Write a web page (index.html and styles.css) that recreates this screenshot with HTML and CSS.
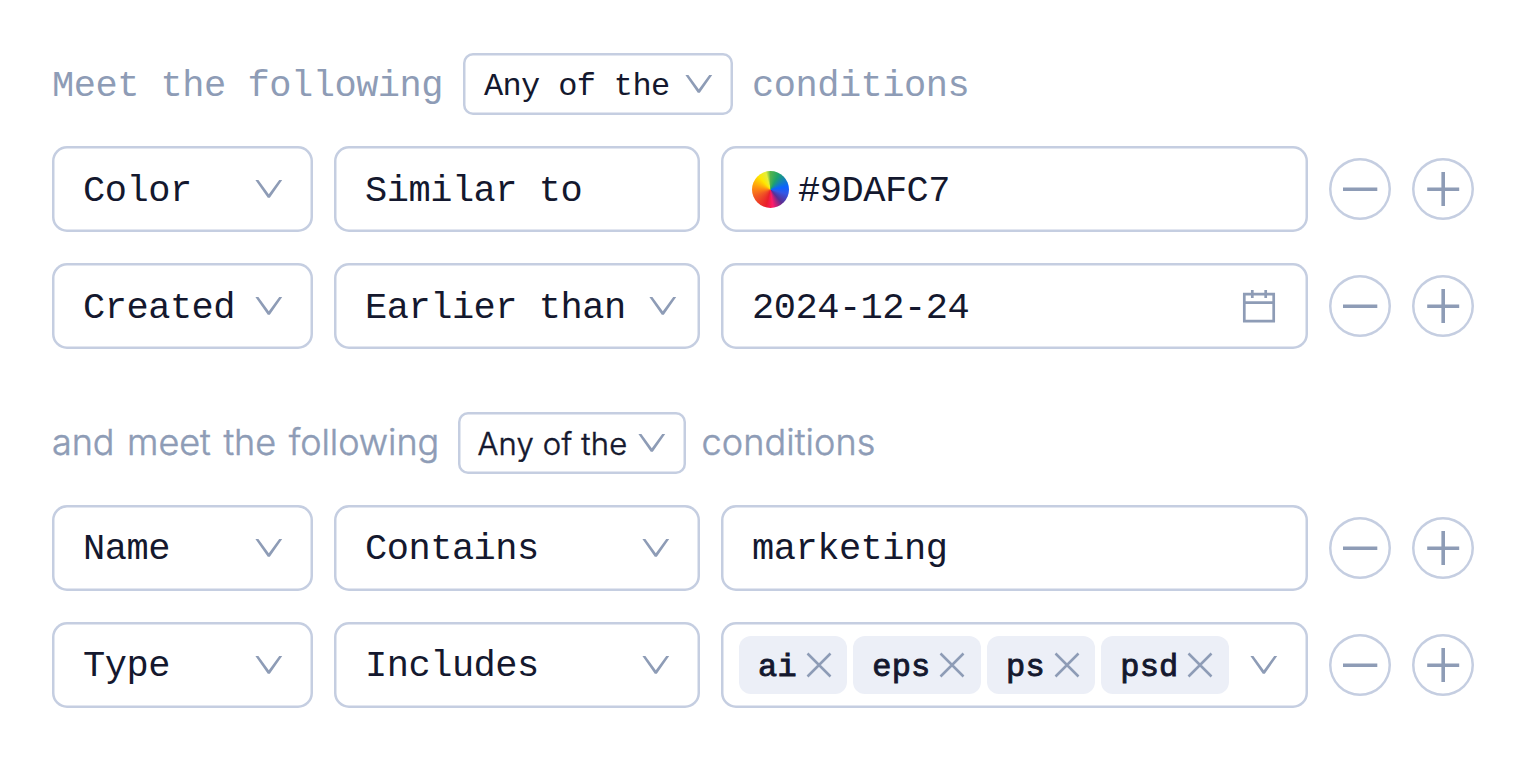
FILE: index.html
```
<!DOCTYPE html>
<html lang="en">
<head>
<meta charset="utf-8">
<title>Filter conditions</title>
<link rel="stylesheet" href="styles.css">
</head>
<body>
<svg class="defs" width="0" height="0">
  <symbol id="chevron" viewBox="0 0 28 20"><path d="M0.400 1H3.400L13.800 15.200 24.200 1H27.200L14.800 18.700H12.800Z"/></symbol>
  <symbol id="close" viewBox="0 0 26 26"><path d="M1.500 1.500 24.500 24.500M24.500 1.500 1.500 24.500"/></symbol>
  <symbol id="minus" viewBox="0 0 62 62"><path d="M14 31.200H48.300"/></symbol>
  <symbol id="plus" viewBox="0 0 62 62"><path d="M15.200 31.200H47.200M31.200 14V48"/></symbol>
</svg>
<main class="filters">
  <section class="group">
    <header class="heading">
      <span class="lead">Meet the following</span>
      <button class="match"><span>Any of the</span><svg class="chevron"><use href="#chevron"/></svg></button>
      <span class="tail">conditions</span>
    </header>
    <div class="row">
      <div class="field"><span>Color</span><svg class="chevron"><use href="#chevron"/></svg></div>
      <div class="field"><span>Similar to</span></div>
      <div class="field value"><i class="wheel"></i><span>#9DAFC7</span></div>
      <button class="round"><svg><use href="#minus"/></svg></button>
      <button class="round"><svg><use href="#plus"/></svg></button>
    </div>
    <div class="row">
      <div class="field"><span>Created</span><svg class="chevron"><use href="#chevron"/></svg></div>
      <div class="field wide-label"><span>Earlier than</span><svg class="chevron"><use href="#chevron"/></svg></div>
      <div class="field value"><span>2024-12-24</span>
        <svg class="calendar" viewBox="0 0 34 34"><path d="M2.300 5.200H31.700V32.200H2.300ZM2.300 13.600H31.700M10.300 1V9M23.700 1V9"/></svg></div>
      <button class="round"><svg><use href="#minus"/></svg></button>
      <button class="round"><svg><use href="#plus"/></svg></button>
    </div>
  </section>
  <section class="group sans">
    <header class="heading">
      <span class="lead">and meet the following</span>
      <button class="match"><span>Any of the</span><svg class="chevron"><use href="#chevron"/></svg></button>
      <span class="tail">conditions</span>
    </header>
    <div class="row">
      <div class="field"><span>Name</span><svg class="chevron"><use href="#chevron"/></svg></div>
      <div class="field"><span>Contains</span><svg class="chevron"><use href="#chevron"/></svg></div>
      <div class="field value"><span>marketing</span></div>
      <button class="round"><svg><use href="#minus"/></svg></button>
      <button class="round"><svg><use href="#plus"/></svg></button>
    </div>
    <div class="row">
      <div class="field"><span>Type</span><svg class="chevron"><use href="#chevron"/></svg></div>
      <div class="field"><span>Includes</span><svg class="chevron"><use href="#chevron"/></svg></div>
      <div class="field value tags">
        <div class="tag"><span>ai</span><svg class="close"><use href="#close"/></svg></div>
        <div class="tag"><span>eps</span><svg class="close"><use href="#close"/></svg></div>
        <div class="tag"><span>ps</span><svg class="close"><use href="#close"/></svg></div>
        <div class="tag"><span>psd</span><svg class="close"><use href="#close"/></svg></div>
        <svg class="chevron"><use href="#chevron"/></svg>
      </div>
      <button class="round"><svg><use href="#minus"/></svg></button>
      <button class="round"><svg><use href="#plus"/></svg></button>
    </div>
  </section>
</main>
</body>
</html>
```
FILE: styles.css
```
* { box-sizing: border-box; }
body {
  margin: 0;
  background: #fff;
  color: #14182e;
  font: 37px/44px "Liberation Mono", monospace;
  letter-spacing: -0.480px;
}
.defs { display: block; height: 0; }
button { padding: 0; border: 0; background: none; color: inherit; font: inherit; letter-spacing: inherit; }
svg { flex: none; }
.filters {
  width: 1474px;
  padding: 53px 0 0 52px;
  display: flex;
  flex-direction: column;
  gap: 63px;
}
.group { display: flex; flex-direction: column; gap: 31px; }
.heading { display: flex; align-items: center; height: 62px; color: #8e9cb6; white-space: pre; }
.lead { width: 411px; }
.lead, .tail { padding-top: 4px; }
.match {
  display: flex;
  align-items: center;
  justify-content: space-between;
  width: 270px;
  height: 62px;
  padding: 0 20px 0 21px;
  border-radius: 10px;
  box-shadow: inset 0 0 0 2.500px #c5cee1;
  color: #14182e;
  font-size: 32px;
  letter-spacing: -0.650px;
}
.match span { padding-top: 5px; }
.tail { margin-left: 19px; }
.row {
  display: grid;
  grid-template-columns: 261px 366px 587px 62px 62px;
  column-gap: 21px;
  align-items: center;
  height: 86px;
}
.field {
  display: flex;
  align-items: center;
  justify-content: space-between;
  height: 86px;
  padding: 0 30px 0 31px;
  border-radius: 15px;
  box-shadow: inset 0 0 0 2.500px #c5cee1;
  white-space: pre;
}
.field > span { padding-top: 3px; }
.sans .field > span { padding-top: 2px; }
.value { padding-right: 32px; }
.wide-label { padding-right: 23px; }
.chevron { width: 28px; height: 20px; fill: #8e9cb6; }
.wheel {
  width: 37px;
  height: 37px;
  margin-right: 9px;
  border-radius: 50%;
  background: conic-gradient(#52b34c 0deg, #1da36c 28deg, #0b62ff 80deg, #3457e5 105deg, #5b2d91 140deg, #ff1a6a 172deg, #e91e2a 195deg, #f15a24 245deg, #ff8c12 275deg, #ffe600 318deg, #e6ef3a 345deg, #52b34c 360deg);
}
.wheel + span { flex: 1; }
.calendar { width: 34px; height: 34px; fill: none; stroke: #8e9cb6; stroke-width: 2.700; }
.round { width: 62px; height: 62px; border-radius: 50%; box-shadow: inset 0 0 0 2.500px #c5cee1; }
.round svg { display: block; width: 62px; height: 62px; fill: none; stroke: #8e9cb6; stroke-width: 3.600; }
.tags { justify-content: flex-start; gap: 6px; padding: 0 0 0 18px; font-size: 32px; letter-spacing: 0.200px; -webkit-text-stroke: 0.900px #14182e; }
.tag {
  display: flex;
  align-items: center;
  gap: 8.800px;
  height: 58px;
  padding: 0 15.700px 0 19px;
  border-radius: 12px;
  background: #eceff7;
}
.tag span { padding-top: 5px; }
.close { width: 26px; height: 26px; fill: none; stroke: #8e9cb6; stroke-width: 2.500; }
.tags .chevron { margin-left: 15px; }
.sans .heading { font-family: Inter, sans-serif; font-weight: 300; letter-spacing: -0.060px; word-spacing: 2.600px; font-size: 36px; -webkit-text-stroke: 0.500px currentColor; }
.sans .lead { width: 405.500px; }
.sans .lead, .sans .tail { padding-top: 0; padding-bottom: 2px; }
.sans .match { width: 228px; padding-left: 20px; font-family: Inter, sans-serif; font-size: 31px; letter-spacing: 0.200px; -webkit-text-stroke: 0.500px #14182e; }
.sans .match span { padding-top: 1px; }
.sans .tail { margin-left: 16px; letter-spacing: 0.100px; }
```
